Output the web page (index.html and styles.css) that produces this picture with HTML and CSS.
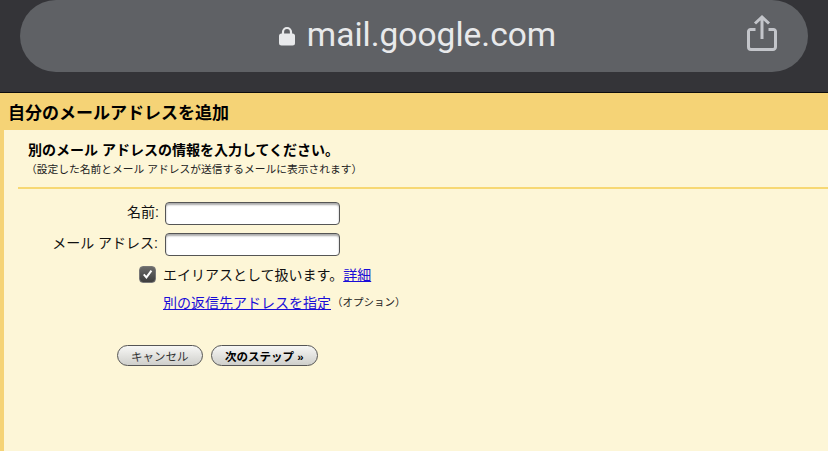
FILE: index.html
```html
<!DOCTYPE html>
<html lang="ja">
<head>
<meta charset="utf-8">
<meta name="viewport" content="width=device-width, initial-scale=1">
<title>自分のメールアドレスを追加</title>
<link rel="stylesheet" href="styles.css">
</head>
<body>

<div class="topbar">
  <div class="urlbar">
    <div class="address">
      <svg class="lock" width="18" height="20" viewBox="0 0 18 20">
        <path d="M5 9V6a4 4 0 0 1 8 0V9" fill="none" stroke="#e8e9eb" stroke-width="2.200"/>
        <rect x="1" y="7.500" width="16" height="12" rx="2.500" fill="#e8e9eb"/>
      </svg>
      <span>mail.google.com</span>
    </div>
    <svg class="share" width="30" height="37" viewBox="0 0 30 37">
      <path d="M8.500 15.500H4a2 2 0 0 0-2.500 2v15.500a2.500 2.500 0 0 0 2.500 2.500h22a2.500 2.500 0 0 0 2.500-2.500V17.500a2 2 0 0 0-2.500-2h-4.500" fill="none" stroke="#c3c5ca" stroke-width="3"/>
      <path d="M15 25V3M8 9.500l7-6.500 7 6.500" fill="none" stroke="#c3c5ca" stroke-width="3"/>
    </svg>
  </div>
</div>

<div class="page">
  <h1 class="title">自分のメールアドレスを追加</h1>
  <div class="content">
    <div class="intro">
      <h2>別のメール アドレスの情報を入力してください。</h2>
      <p>（設定した名前とメール アドレスが送信するメールに表示されます）</p>
    </div>
    <form class="addform">
      <div class="row">
        <label for="name" class="name-label">名前:</label>
        <input type="text" id="name">
      </div>
      <div class="row">
        <label for="email">メール アドレス:</label>
        <input type="text" id="email">
      </div>
      <div class="row alias">
        <span class="checkbox">
          <svg width="16" height="16" viewBox="0 0 18 18">
            <path d="M4.500 9.500l3.200 3.500 6-8" fill="none" stroke="#fff" stroke-width="2.400"/>
          </svg>
        </span>
        <span>エイリアスとして扱います。<a href="#">詳細</a></span>
      </div>
      <div class="row reply">
        <a href="#">別の返信先アドレスを指定</a>
        <span class="option">（オプション）</span>
      </div>
      <div class="buttons">
        <button type="button">キャンセル</button>
        <button type="button" class="next">次のステップ »</button>
      </div>
    </form>
  </div>
</div>

</body>
</html>
```

FILE: styles.css
```css
html, body {
  margin: 0;
  height: 451px;
  overflow: hidden;
}

body {
  font-family: "Liberation Sans", "Noto Sans CJK JP", sans-serif;
  background-color: #fdf6d7;
  color: #111;
}

.topbar {
  height: 93px;
  box-sizing: border-box;
  padding: 0 20px;
  background-color: #343438;
  border-bottom: 1px solid #0d0d0d;
}

.urlbar {
  height: 72px;
  border-radius: 36px;
  background-color: #5f6165;
  display: flex;
  align-items: center;
  justify-content: center;
  position: relative;
}

.address {
  display: flex;
  align-items: center;
  gap: 11px;
  color: #e8e9eb;
  font-family: Roboto, "Liberation Sans", sans-serif;
  font-size: 33.500px;
  margin: -4px 0 0 6px;
}

.lock {
  margin-top: 3px;
}

.share {
  position: absolute;
  right: 31px;
  top: 14px;
}

.page {
  border-left: 4px solid #f5d376;
  height: 358px;
}

.title {
  margin: 0;
  height: 37px;
  line-height: 41px;
  padding-left: 4px;
  font-size: 17px;
  font-weight: bold;
  color: #000;
  background-color: #f5d376;
}

.content {
  padding-left: 14px;
}

.intro {
  padding: 12px 0 0 10px;
  height: 45px;
  border-bottom: 2px solid #f7d873;
}

.intro h2 {
  margin: 0;
  font-size: 14px;
  line-height: 16px;
  font-weight: bold;
  color: #000;
}

.intro p {
  margin: 4px 0 0 -2px;
  font-size: 10.750px;
  line-height: 14px;
  color: #222;
}

.addform {
  padding-top: 13px;
  font-size: 14px;
}

.row {
  display: flex;
  align-items: center;
  height: 23px;
  margin-bottom: 8px;
}

.row label {
  width: 147px;
  text-align: right;
  padding: 0 7px 5px 0;
  box-sizing: border-box;
}

.row .name-label {
  padding-right: 6px;
}

.row input {
  width: 175px;
  height: 23px;
  box-sizing: border-box;
  border: 1px solid #555;
  border-radius: 4px;
  background-color: #fff;
  box-shadow: inset 0 2px 2px #aaa;
  padding: 0;
}

.alias {
  height: 20px;
  margin: 0 0 0 121px;
  gap: 7px;
}

.checkbox {
  display: flex;
  width: 15px;
  height: 15px;
  align-items: center;
  justify-content: center;
  background: linear-gradient(#6a6a6a, #3e3e3e);
  border: 1px solid #777;
  border-radius: 4px;
}

a {
  color: #1a0dd8;
}

.reply {
  margin: 6px 0 0 145px;
}

.option {
  font-size: 10.500px;
  color: #222;
  margin-left: 1px;
}

.buttons {
  display: flex;
  gap: 8px;
  margin: 32px 0 0 99px;
}

button {
  height: 21px;
  padding: 0 13px;
  border: 1px solid #555;
  border-radius: 11px;
  background: linear-gradient(#f7f7f5, #cfcfcb);
  font-family: inherit;
  font-size: 11.500px;
  color: #333;
  cursor: pointer;
}

.next {
  font-weight: bold;
  color: #000;
  padding: 0 13.500px;
}
```
